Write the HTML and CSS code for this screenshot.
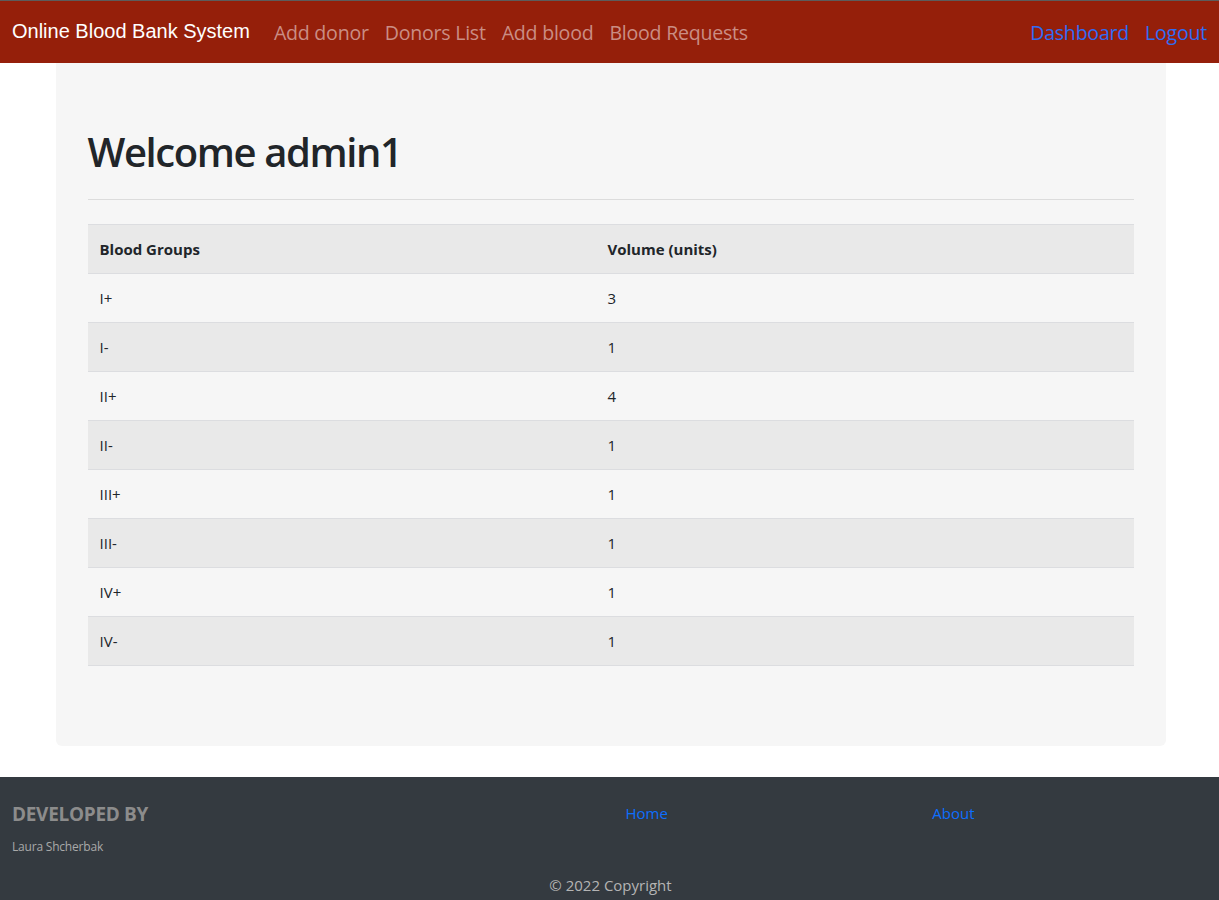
FILE: index.html
```html
<!DOCTYPE html>
<html lang="en">
<head>
<meta charset="utf-8">
<title>Online Blood Bank System</title>
<link rel="stylesheet" href="styles.css">
</head>
<body>
<nav class="navbar">
  <a class="brand" href="#">Online Blood Bank System</a>
  <ul class="nav-main">
    <li><a href="#">Add donor</a></li>
    <li><a href="#">Donors List</a></li>
    <li><a href="#">Add blood</a></li>
    <li><a href="#">Blood Requests</a></li>
  </ul>
  <ul class="nav-right">
    <li><a href="#">Dashboard</a></li>
    <li><a href="#">Logout</a></li>
  </ul>
</nav>

<main class="container">
  <section class="jumbotron">
    <h1 class="title">Welcome admin1</h1>
    <hr class="divider">
    <table class="blood-table">
      <thead>
        <tr><th class="col-group">Blood Groups</th><th>Volume (units)</th></tr>
      </thead>
      <tbody>
        <tr><td>I+</td><td>3</td></tr>
        <tr><td>I-</td><td>1</td></tr>
        <tr><td>II+</td><td>4</td></tr>
        <tr><td>II-</td><td>1</td></tr>
        <tr><td>III+</td><td>1</td></tr>
        <tr><td>III-</td><td>1</td></tr>
        <tr><td>IV+</td><td>1</td></tr>
        <tr><td>IV-</td><td>1</td></tr>
      </tbody>
    </table>
  </section>
</main>

<footer class="footer">
  <div class="footer-row">
    <div class="footer-col">
      <h5 class="footer-title">DEVELOPED BY</h5>
      <p class="footer-name">Laura Shcherbak</p>
    </div>
    <div class="footer-col footer-link-col"><a href="#">Home</a></div>
    <div class="footer-col footer-link-col"><a href="#">About</a></div>
  </div>
  <div class="copyright">© 2022 Copyright</div>
</footer>
</body>
</html>
```

FILE: styles.css
```css
* { box-sizing: border-box; }

html, body {
  margin: 0;
  padding: 0;
}

body {
  font-family: "Open Sans", "Noto Sans", sans-serif;
  font-size: 15px;
  color: #212529;
  background: #fff;
}

a { text-decoration: none; }

ul { list-style: none; margin: 0; padding: 0; }

/* Navbar */
.navbar {
  display: flex;
  align-items: center;
  height: 63px;
  background: #951f0a;
  border-top: 1px solid #5c5c5c;
  padding: 0 12px;
}

.brand {
  font-family: "Liberation Sans", Arial, sans-serif;
  font-size: 20px;
  color: #fff;
  margin-right: 16px;
  margin-top: -2px;
}

.nav-main, .nav-right {
  display: flex;
}

.nav-right { margin-left: auto; }

.nav-main a, .nav-right a {
  display: block;
  padding: 0 8px;
  font-size: 19.6px;
  letter-spacing: -0.25px;
  margin-top: 1px;
}

.nav-main a { color: #ca8d84; }

.nav-right a { color: #2f6cf4; }
.nav-right li:last-child a { padding-right: 0; }

/* Main */
.container {
  width: 1110px;
  margin: 0 auto;
  padding-bottom: 31px;
  position: relative;
  left: 1px;
}

.jumbotron {
  background: #f6f6f6;
  border-radius: 0 0 6px 6px;
  padding: 64px 32px 64px;
}

.title {
  margin: 0 0 8px;
  font-size: 40px;
  font-weight: 550;
  line-height: 50px;
  letter-spacing: -1.4px;
}

.divider {
  border: 0;
  border-top: 1px solid #dcdcdc;
  margin: 22px 0 24px;
}

.blood-table {
  width: 100%;
  border-collapse: collapse;
  margin-bottom: 16px;
  font-size: 15px;
}

.blood-table th,
.blood-table td {
  text-align: left;
  padding: 12px;
  line-height: 24px;
  border-bottom: 1px solid #dcdde0;
}

.blood-table th {
  font-weight: 700;
  background: #e9e9e9;
  border-top: 1px solid #dcdde0;
}

.blood-table .col-group { width: 508px; }

.blood-table tbody tr:nth-child(even) td {
  background: #e9e9e9;
}

/* Footer */
.footer {
  background: #343a40;
  height: 140px;
  overflow: hidden;
}

.footer-row {
  display: grid;
  grid-template-columns: 50% 25% 25%;
  padding-top: 24px;
}

.footer-col {
  padding: 0 12px;
}

.footer-title {
  margin: 0;
  font-size: 19px;
  font-weight: 700;
  color: #8c8c8c;
  line-height: 26px;
  letter-spacing: -0.3px;
}

.footer-name {
  margin: 11px 0 0;
  font-size: 12px;
  color: #a9a9a9;
  letter-spacing: -0.2px;
}

.footer-link-col {
  padding-left: 16px;
  padding-top: 2px;
  font-size: 15px;
}

.footer-link-col a { color: #0d6efd; }
.footer-link-col:last-child { padding-left: 18px; }

.copyright {
  text-align: center;
  color: #b4b4b4;
  font-size: 15px;
  margin-top: 20px;
  padding-left: 2px;
}
```
